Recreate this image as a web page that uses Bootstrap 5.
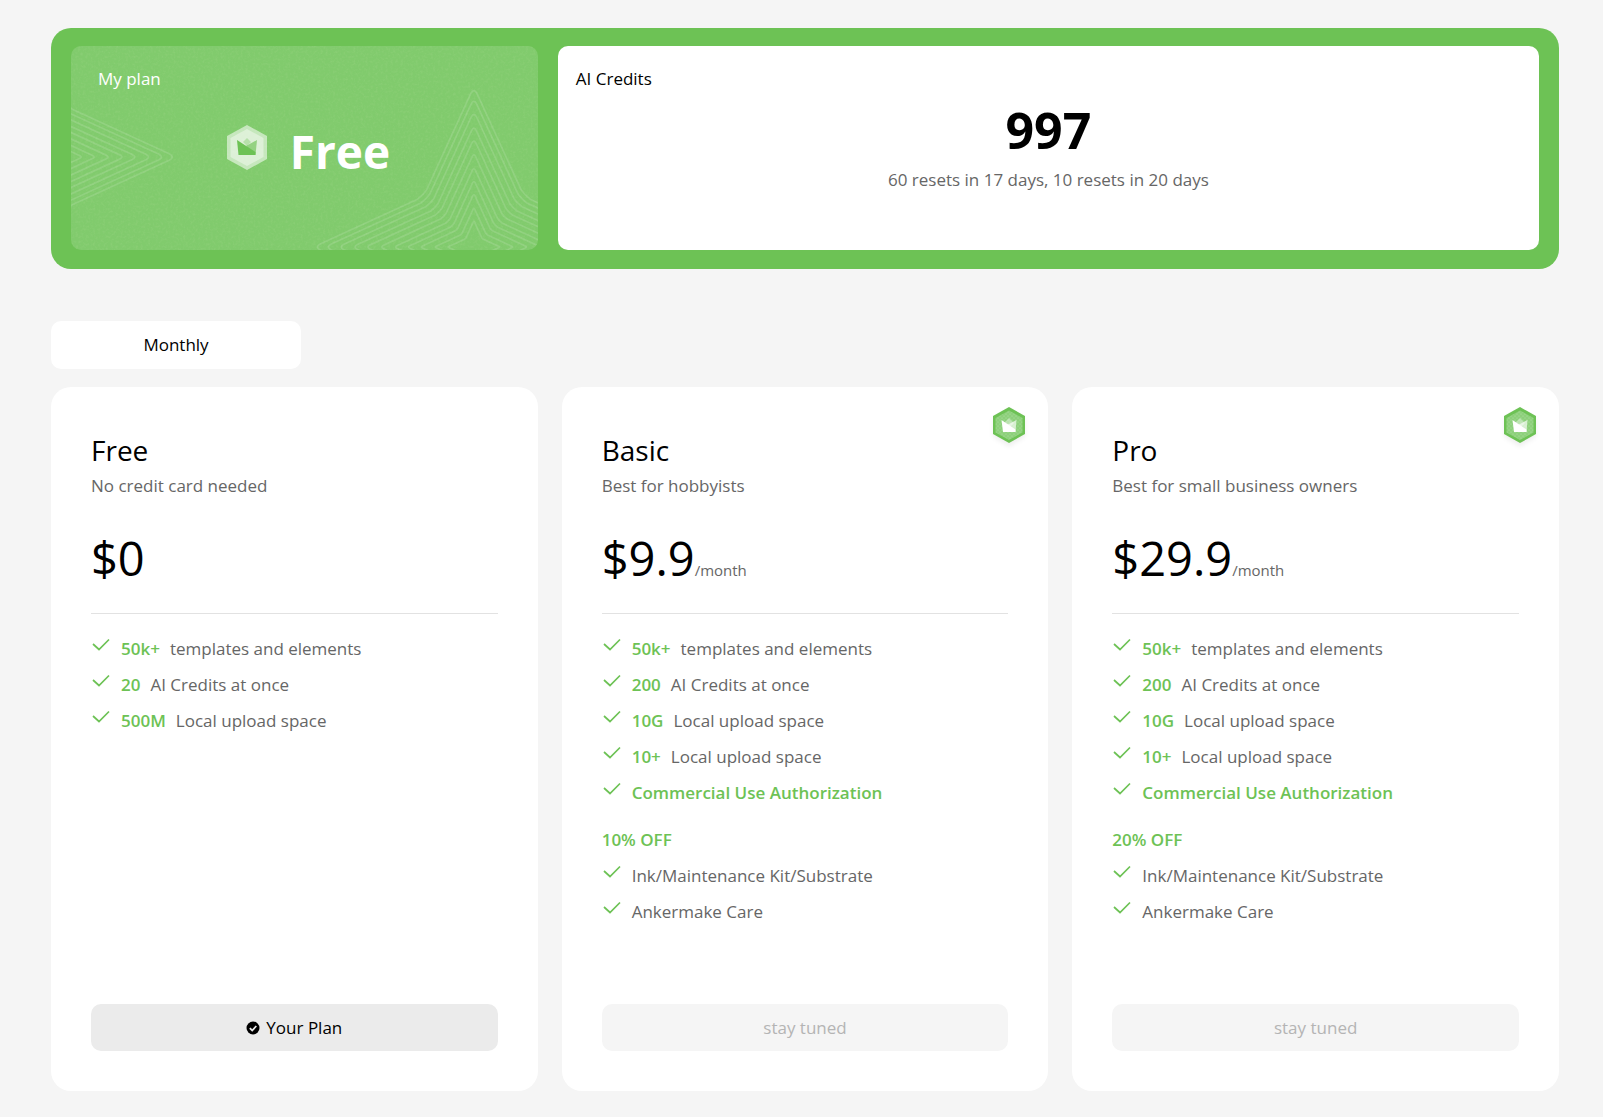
<!DOCTYPE html>
<html lang="en">
<head>
<meta charset="utf-8">
<meta name="viewport" content="width=device-width, initial-scale=1">
<title>Plans</title>
<link href="https://cdn.jsdelivr.net/npm/bootstrap@5.3.0/dist/css/bootstrap.min.css" rel="stylesheet">
<style>
  :root { --brand: #6dc255; --ink-soft: #666; }
  body { background: #f5f5f5; color: #000; font-family: "Open Sans", "Noto Sans", sans-serif; font-size: 17px; line-height: 24px; }
  .page { padding: 28px 44px 26px 51px; }
  .hero { background: var(--brand); border-radius: 20px; padding: 18px 20px 19px; gap: 20px; }
  .plan-panel, .credit-panel { border-radius: 10px; min-height: 204px; padding-top: 21px; }
  .plan-panel { background: #81cb6d; color: #fff; overflow: hidden; }
  .plan-panel > .label { padding-left: 27px; }
  .credit-panel > .label { padding-left: 18px; }
  .panel-art { inset: 0; width: 100%; height: 100%; }
  .plan-name { margin-top: 32px; gap: 23px; padding-left: 8px; }
  .plan-name strong { font-size: 46px; line-height: 56px; font-weight: 700; }
  .credit-count { font-size: 50px; line-height: 60px; font-weight: 700; margin: 9px 0 5px; }
  .soft { color: var(--ink-soft); line-height: 30px; }
  .period { margin: 52px 0 18px; width: 250px; height: 48px; border: 0; border-radius: 10px; background: #fff; color: #000; }
  .plan-card { border: 0; border-radius: 20px; padding: 44px 40px 40px; }
  .plan-card h2 { font-size: 28px; line-height: 38px; font-weight: 400; margin-bottom: 2px; }
  .price { font-size: 47px; line-height: 66px; margin: 24px 0 22px; }
  .price small { font-size: 15px; line-height: 1; color: var(--ink-soft); }
  .plan-card hr { margin: 0 0 17px; border-color: #e2e2e2; opacity: 1; }
  .perks { line-height: 36px; color: var(--ink-soft); }
  .perks b, .offer { color: var(--brand); font-weight: 600; line-height: 36px; }
  .perks li { gap: 10px; }
  .perks svg { width: 20px; height: 20px; margin-top: 5px; }
  .offer { margin-top: 11px; }
  .plan-action { margin-top: 74px; height: 47px; border: 0; border-radius: 10px; background: #ebebeb; color: #000; gap: 6px; }
  .plan-action:disabled { background: #f5f5f5; color: #b4b4b4; }
  .tier-badge { top: 18px; right: 19px; }
  @media (min-width: 992px) { .plan-panel { flex: 0 0 31.8%; } }
</style>
<script src="https://cdn.jsdelivr.net/npm/bootstrap@5.3.0/dist/js/bootstrap.bundle.min.js"></script>
</head>
<body>
<svg width="0" height="0" class="position-absolute" aria-hidden="true">
  <defs>
    <path id="star" vector-effect="non-scaling-stroke" d="M-2-97Q0-101 2-97L30-36Q32-33 36-30L97-2Q101 0 97 2L36 30Q32 33 30 36L2 97Q0 101-2 97L-30 36Q-32 33-36 30L-97 2Q-101 0-97-2L-36-30Q-32-33-30-36Z"/>
    <g id="stars" fill="none" stroke="#fff" stroke-opacity=".13" stroke-width="1.7">
      <use href="#star" transform="scale(1.58)"/><use href="#star" transform="scale(1.47)"/>
      <use href="#star" transform="scale(1.34)"/><use href="#star" transform="scale(1.2)"/>
      <use href="#star" transform="scale(1.07)"/><use href="#star" transform="scale(.93)"/>
      <use href="#star" transform="scale(.79)"/><use href="#star" transform="scale(.66)"/>
      <use href="#star" transform="scale(.53)"/><use href="#star" transform="scale(.39)"/>
      <use href="#star" transform="scale(.26)"/>
    </g>
    <filter id="grain" x="0" y="0" width="100%" height="100%">
      <feTurbulence type="fractalNoise" baseFrequency=".4" numOctaves="2" seed="4"/>
      <feColorMatrix values="0 0 0 0 .35  0 0 0 0 .68  0 0 0 0 .25  1.6 0 0 0 -.66"/>
    </filter>
    <pattern id="dots" width="4" height="4" patternUnits="userSpaceOnUse"><circle cx="1" cy="1" r=".5" fill="#fff" fill-opacity=".4"/><circle cx="3" cy="3" r=".5" fill="#fff" fill-opacity=".4"/></pattern>
    <symbol id="tick" viewBox="0 0 20 20"><path d="M2 8L8 13.500L18 3.500" fill="none" stroke="#6dc255" stroke-width="1.700"/></symbol>
    <symbol id="tier" viewBox="0 0 40 46">
      <path d="M20 5L36 14V32L20 42L4 32V14Z" fill="#000" fill-opacity=".06" filter="blur(2px)"/>
      <path d="M20 2L36 11V29L20 38L4 29V11Z" fill="#6dc255"/>
      <path d="M20 5.500L33.500 13V27.500L20 35L6.500 27.500V13Z" fill="#8dd07b"/>
      <path d="M20 5.500L33.500 13V27.500L20 35L6.500 27.500V13Z" fill="url(#dots)"/>
      <path d="M15 18L20 13L25 18L20 23Z" fill="#fff" fill-opacity=".4"/>
      <path d="M27.500 15L26.500 27L18 20Z" fill="#fff" fill-opacity=".65"/>
      <path d="M12.500 15L26.500 24.500V27H14Z" fill="#fff"/>
    </symbol>
  </defs>
</svg>

<main class="page">
  <section class="hero d-flex flex-column flex-lg-row">
    <div class="plan-panel position-relative">
      <svg class="panel-art position-absolute" viewBox="0 0 467 204" preserveAspectRatio="xMidYMid slice" aria-hidden="true">
        <rect width="467" height="204" filter="url(#grain)" opacity=".4"/>
        <use href="#stars" transform="translate(403 201)"/>
        <use href="#stars" transform="translate(-55 111)"/>
      </svg>
      <div class="label position-relative">My plan</div>
      <div class="plan-name position-relative d-flex justify-content-center">
        <svg width="40" height="50" viewBox="0 0 40 50" aria-hidden="true">
          <path d="M20 2L40 13V36L20 47L0 36V13Z" fill="#fff" fill-opacity=".55"/>
          <path d="M20 6L36.500 15V34L20 43L3.500 34V15Z" fill="#fff" fill-opacity=".4"/>
          <path d="M16 19L20 15L24 19L20 23Z" fill="#6dc255" fill-opacity=".35"/>
          <path d="M30 17L28.500 32L19 23Z" fill="#6dc255" fill-opacity=".65"/>
          <path d="M10 17L28.500 29V32H11.500Z" fill="#6dc255"/>
        </svg>
        <strong>Free</strong>
      </div>
    </div>
    <div class="credit-panel bg-white flex-grow-1">
      <div class="label">AI Credits</div>
      <div class="credit-count text-center">997</div>
      <div class="soft text-center">60 resets in 17 days, 10 resets in 20 days</div>
    </div>
  </section>

  <button type="button" class="period d-block">Monthly</button>

  <section class="row row-cols-1 row-cols-lg-3 g-4">
    <div class="col">
      <article class="card plan-card h-100">
        <h2>Free</h2>
        <div class="soft">No credit card needed</div>
        <div class="price">$0</div>
        <hr>
        <ul class="perks list-unstyled m-0">
          <li class="d-flex"><svg><use href="#tick"/></svg><b>50k+</b><span>templates and elements</span></li>
          <li class="d-flex"><svg><use href="#tick"/></svg><b>20</b><span>AI Credits at once</span></li>
          <li class="d-flex"><svg><use href="#tick"/></svg><b>500M</b><span>Local upload space</span></li>
        </ul>
        <div class="mt-auto d-grid">
          <button type="button" class="plan-action d-flex align-items-center justify-content-center">
            <svg width="14" height="14" viewBox="0 0 14 14" aria-hidden="true"><circle cx="7" cy="7" r="6.500"/><path d="M3.800 7.200L6.200 9.500L10.300 5" fill="none" stroke="#ebebeb" stroke-width="1.800"/></svg>
            Your Plan
          </button>
        </div>
      </article>
    </div>
    <div class="col">
      <article class="card plan-card h-100">
        <svg class="tier-badge position-absolute" width="40" height="46" aria-hidden="true"><use href="#tier"/></svg>
        <h2>Basic</h2>
        <div class="soft">Best for hobbyists</div>
        <div class="price">$9.9<small>/month</small></div>
        <hr>
        <ul class="perks list-unstyled m-0">
          <li class="d-flex"><svg><use href="#tick"/></svg><b>50k+</b><span>templates and elements</span></li>
          <li class="d-flex"><svg><use href="#tick"/></svg><b>200</b><span>AI Credits at once</span></li>
          <li class="d-flex"><svg><use href="#tick"/></svg><b>10G</b><span>Local upload space</span></li>
          <li class="d-flex"><svg><use href="#tick"/></svg><b>10+</b><span>Local upload space</span></li>
          <li class="d-flex"><svg><use href="#tick"/></svg><b>Commercial Use Authorization</b></li>
        </ul>
        <div class="offer">10% OFF</div>
        <ul class="perks list-unstyled m-0">
          <li class="d-flex"><svg><use href="#tick"/></svg><span>Ink/Maintenance Kit/Substrate</span></li>
          <li class="d-flex"><svg><use href="#tick"/></svg><span>Ankermake Care</span></li>
        </ul>
        <div class="mt-auto d-grid"><button type="button" class="plan-action" disabled>stay tuned</button></div>
      </article>
    </div>
    <div class="col">
      <article class="card plan-card h-100">
        <svg class="tier-badge position-absolute" width="40" height="46" aria-hidden="true"><use href="#tier"/></svg>
        <h2>Pro</h2>
        <div class="soft">Best for small business owners</div>
        <div class="price">$29.9<small>/month</small></div>
        <hr>
        <ul class="perks list-unstyled m-0">
          <li class="d-flex"><svg><use href="#tick"/></svg><b>50k+</b><span>templates and elements</span></li>
          <li class="d-flex"><svg><use href="#tick"/></svg><b>200</b><span>AI Credits at once</span></li>
          <li class="d-flex"><svg><use href="#tick"/></svg><b>10G</b><span>Local upload space</span></li>
          <li class="d-flex"><svg><use href="#tick"/></svg><b>10+</b><span>Local upload space</span></li>
          <li class="d-flex"><svg><use href="#tick"/></svg><b>Commercial Use Authorization</b></li>
        </ul>
        <div class="offer">20% OFF</div>
        <ul class="perks list-unstyled m-0">
          <li class="d-flex"><svg><use href="#tick"/></svg><span>Ink/Maintenance Kit/Substrate</span></li>
          <li class="d-flex"><svg><use href="#tick"/></svg><span>Ankermake Care</span></li>
        </ul>
        <div class="mt-auto d-grid"><button type="button" class="plan-action" disabled>stay tuned</button></div>
      </article>
    </div>
  </section>
</main>
</body>
</html>
